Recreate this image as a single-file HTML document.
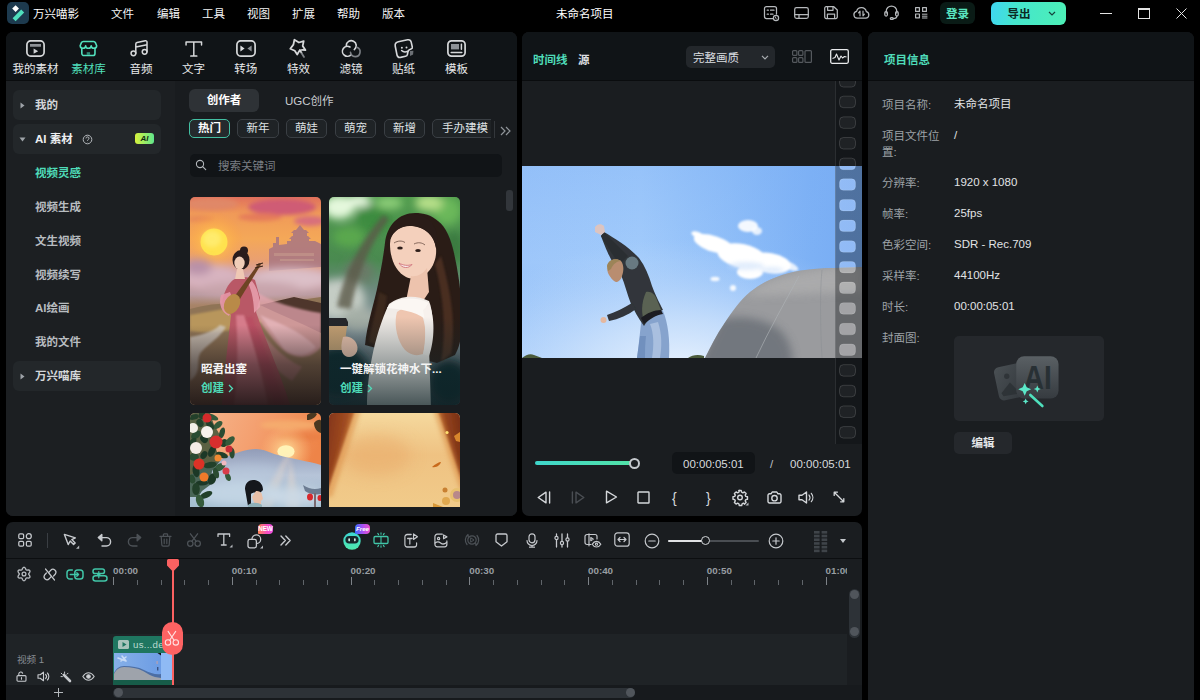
<!DOCTYPE html>
<html lang="zh-CN">
<head>
<meta charset="utf-8">
<title>万兴喵影</title>
<style>
*{box-sizing:border-box;margin:0;padding:0}
html,body{width:1200px;height:700px;overflow:hidden;background:#000}
body{font-family:"Liberation Sans","Noto Sans CJK SC",sans-serif;font-size:11.5px;color:#e6e8ea;position:relative;line-height:1}
.abs{position:absolute}
.t{position:absolute;white-space:nowrap;line-height:14px;margin-top:1px}
svg{position:absolute;overflow:visible}
.ic{fill:none;stroke:#c6c9cc;stroke-width:1.3;stroke-linecap:round;stroke-linejoin:round}
#titlebar .ic{stroke:#b6b9bc;stroke-width:1.25}
.hd .ic{stroke:#d6d8da}
.panel{position:absolute;border-radius:7px;overflow:hidden;background:#1a1d20}
.hd{position:absolute;left:0;top:0;right:0;height:49px;background:#101417;border-bottom:1px solid #0a0c0e}
/* titlebar */
.menu{top:6px;color:#f2f3f4}
/* left panel */
.tab{position:absolute;top:35px;width:52px;text-align:center;color:#e8eaec;line-height:14px;margin-top:.5px}
.side{position:absolute;left:0;top:49px;width:169px;bottom:0;background:#1c1f22}
.srow{position:absolute;left:7px;width:148px;height:30px;border-radius:6px;background:#23272a}
.sub{position:absolute;left:29px;color:#b8bcc0;font-weight:bold;line-height:14px;margin-top:1px}
.chip{position:absolute;top:87px;height:19px;border:1px solid #3a3f44;border-radius:5px;color:#dfe2e4;text-align:center;line-height:16.600px;background:#1f2326}
.card{position:absolute;width:131px;border-radius:5px;overflow:hidden;background:#333}
.lab{position:absolute;left:68px;color:#9da2a7}
.lab,.val{position:absolute;line-height:16px;white-space:nowrap}.lab{margin-top:.7px}
.lab{left:14px;color:#9da2a7}
.val{left:86px;color:#e1e3e5}
.tk{position:absolute;width:1px;background:#7d8287}
.tl{position:absolute;top:41px;color:#989da2;font-size:9.800px;font-weight:bold;line-height:12px}
.cj{color:inherit}
</style>
</head>
<body>
<!-- TITLEBAR -->
<div id="titlebar" class="abs" style="left:0;top:0;width:1200px;height:28px">
<div class="abs" style="left:7px;top:2px;width:22px;height:22px;border-radius:5px;background:#1d3a4e"></div>
<svg style="left:7px;top:2px" width="22" height="22" viewBox="0 0 22 22"><path d="M8.6 3.2 L12 6.6 L8.6 10 L5.2 6.6 Z" fill="#fff"/><path d="M14.2 7.6 L17.2 10.6 L8.6 19.2 L5.6 16.2 Z" fill="#4fe0bd"/></svg>
<span class="t" style="left:33px;top:6px;color:#fff"><span class="cj">万兴喵影</span></span>
<span class="t menu" style="left:111px"><span class="cj">文件</span></span>
<span class="t menu" style="left:157px"><span class="cj">编辑</span></span>
<span class="t menu" style="left:202px"><span class="cj">工具</span></span>
<span class="t menu" style="left:247px"><span class="cj">视图</span></span>
<span class="t menu" style="left:292px"><span class="cj">扩展</span></span>
<span class="t menu" style="left:337px"><span class="cj">帮助</span></span>
<span class="t menu" style="left:382px"><span class="cj">版本</span></span>
<span class="t" style="left:556px;top:6px;color:#fff"><span class="cj">未命名项目</span></span>
<!-- right icons -->
<svg style="left:764px;top:6px" width="16" height="16" viewBox="0 0 16 16" class="ic"><path d="M9 12.5H2.5a2 2 0 0 1-2-2V2.5a2 2 0 0 1 2-2h8a2 2 0 0 1 2 2V8"/><path d="M3.2 4.2h1.2M6.5 4.2h3.5M3.2 8.2h1.2M6.5 8.2h2.5"/><circle cx="12" cy="12" r="2.6"/><path d="M11.6 11v1.2l.8.6" stroke-width="1"/></svg>
<svg style="left:794px;top:7px" width="15" height="12" viewBox="0 0 15 12" class="ic"><rect x=".7" y=".7" width="13.6" height="10.6" rx="1.8"/><path d="M.7 7.5h13.6M5 7.5v3.8"/></svg>
<svg style="left:824px;top:6px" width="14" height="13" viewBox="0 0 14 13" class="ic"><path d="M.7 2.2a1.5 1.5 0 0 1 1.5-1.5h7.6l3.5 3.3v7a1.5 1.5 0 0 1-1.5 1.5H2.2a1.5 1.5 0 0 1-1.5-1.5z"/><path d="M3.6.9v3.4h5.4V.9M3.4 12.3V8h7.2v4.3"/></svg>
<svg style="left:853px;top:6px" width="17" height="13" viewBox="0 0 17 13" class="ic"><path d="M4.2 12.2a3.5 3.5 0 0 1-.6-6.9 5 5 0 0 1 9.700.4 3.300 3.300 0 0 1-.6 6.500z"/><path d="M7 9.800V5.200L5.600 6.800M10 5.200v4.600l1.400-1.600" stroke-width="1.200"/></svg>
<svg style="left:884px;top:5px" width="15" height="15" viewBox="0 0 15 15" class="ic"><path d="M2.2 8V6.3a5.3 5.3 0 0 1 10.6 0V8"/><rect x=".8" y="6.6" width="2.6" height="4.4" rx="1.2"/><rect x="11.6" y="6.6" width="2.6" height="4.4" rx="1.2"/><path d="M12.8 11c0 1.8-1.6 2.6-3.6 2.6"/><rect x="6.3" y="12.6" width="3" height="1.8" rx=".9"/></svg>
<svg style="left:915px;top:7px;stroke-width:1.2" width="13" height="12" viewBox="0 0 13 12" class="ic"><rect x=".6" y=".6" width="3.8" height="3.8"/><rect x="7.6" y=".6" width="3.8" height="3.8"/><rect x=".6" y="7" width="3.8" height="3.8"/><path d="M7.4 7.2h4.6M7.4 9.2h4.6M7.4 11h4.6" stroke-width="1"/></svg>
<div class="abs" style="left:940px;top:2px;width:35px;height:22px;border-radius:6px;background:#0a1b16;color:#5be7c2;font-weight:bold;text-align:center;line-height:24px"><span class="cj">登录</span></div>
<div class="abs" style="left:990.600px;top:1.500px;width:75.400px;height:23px;border-radius:6px;background:linear-gradient(100deg,#3fd6f2 0%,#45e6cc 35%,#4df0b6 100%);color:#0c2a24;font-weight:bold;line-height:25px"><span style="position:absolute;left:17px"><span class="cj">导出</span></span></div>
<svg style="left:1048px;top:11px" width="8" height="5" viewBox="0 0 8 5"><path d="M1 1l3 3 3-3" fill="none" stroke="#15443a" stroke-width="1.2"/></svg>
<div class="abs" style="left:1100px;top:13px;width:12px;height:1px;background:#e4e4e4"></div>
<div class="abs" style="left:1138px;top:8px;width:12px;height:11px;border:1px solid #e4e4e4;border-top-width:2px"></div>
<svg style="left:1176px;top:8px" width="11" height="11" viewBox="0 0 11 11"><path d="M.5.5l10 10M10.500.5l-10 10" stroke="#e4e4e4" stroke-width="1" fill="none"/></svg>
</div>
<!-- LEFT PANEL -->
<div id="media" class="panel" style="left:6px;top:32px;width:510.600px;height:484px">
<div class="hd">
<div class="abs" style="left:3.5px;top:0;width:52px;height:48px"><svg style="left:16.200px;top:8.400px;stroke-width:1.7" width="19" height="17" viewBox="0 0 19 17" class="ic"><rect x=".9" y=".9" width="17.200" height="15.200" rx="3.800"/><path d="M4 5.400h11" stroke="#8d9196" stroke-width="2.800" stroke-linecap="butt"/><path d="M7.600 8.600l4.600 2.600-4.600 2.600z" fill="#cfd2d4" stroke="none"/></svg><span class="tab" style="left:0;top:29px;color:#e8eaec"><span class="cj">我的素材</span></span></div>
<div class="abs" style="left:56.5px;top:0;width:52px;height:48px"><svg style="left:16.300px;top:8.300px;stroke-width:1.7;stroke:#52e0bd" width="18.800" height="17" viewBox="0 0 20 17" class="ic"><path d="M3 8.6v5.2a2.2 2.2 0 0 0 2.200 2.200h9.600a2.200 2.200 0 0 0 2.200-2.200V8.600"/><path d="M1.200 5.600l1.400-3.300a2.200 2.200 0 0 1 2-1.300h10.800a2.200 2.200 0 0 1 2 1.300l1.400 3.300c0 1.600-1.300 2.700-2.900 2.700s-2.900-1.100-2.900-2.700c0 1.600-1.300 2.700-2.950 2.700s-2.950-1.100-2.950-2.700c0 1.600-1.300 2.700-2.900 2.700s-2.900-1.100-2.900-2.700z"/><rect x="8.200" y="12.400" width="3.600" height="3" fill="#2f8a76" stroke="none"/></svg><span class="tab" style="left:0;top:29px;color:#52e0bd"><span class="cj">素材库</span></span></div>
<div class="abs" style="left:109.0px;top:0;width:52px;height:48px"><svg style="left:15px;top:8px;stroke-width:1.600" width="19" height="17.100" viewBox="0 0 20 18" class="ic"><circle cx="3.600" cy="14" r="2.500"/><circle cx="15.400" cy="12.400" r="2.500"/><path d="M6.100 14V4.200c0-.8.500-1.400 1.300-1.600l8.700-1.800c1-.2 1.800.4 1.800 1.400v10.200M6.100 7.400l11.800-2.400"/></svg><span class="tab" style="left:0;top:29px;color:#e8eaec"><span class="cj">音频</span></span></div>
<div class="abs" style="left:161.5px;top:0;width:52px;height:48px"><svg style="left:17.200px;top:9px;stroke-width:1.700" width="17.600" height="16" viewBox="0 0 20 16" preserveAspectRatio="none" class="ic"><path d="M1.200 3.800V1h17.600v2.800M10 1v14M6.600 15h6.800"/></svg><span class="tab" style="left:0;top:29px;color:#e8eaec"><span class="cj">文字</span></span></div>
<div class="abs" style="left:213.7px;top:0;width:52px;height:48px"><svg style="left:16px;top:8px;stroke-width:1.700" width="20" height="17" viewBox="0 0 20 17" class="ic"><rect x=".9" y=".9" width="18.200" height="15.200" rx="3.800"/><path d="M4.400 5.400l4.200 3.100-4.200 3.100z" fill="#dcdee0" stroke="none"/><path d="M15.600 5.400l-4.200 3.100 4.200 3.100z" fill="#8d9196" stroke="none"/></svg><span class="tab" style="left:0;top:29px;color:#e8eaec"><span class="cj">转场</span></span></div>
<div class="abs" style="left:266.5px;top:0;width:52px;height:48px"><svg style="left:16px;top:7px;stroke-width:1.800" width="20" height="20" viewBox="0 0 20 20" class="ic"><path d="M12.900 10.900L16.400 11.100 13.700 6.900 14.700 2.100 9.900 3.500 5.400.8 4.400 5.600 1.300 9.700 5.800 11.700 8.200 15.500 10.900 10.900 12.600 14.100" stroke-linejoin="round"/><path d="M12.800 14.400l2.200 3.500" stroke="#7d8186"/></svg><span class="tab" style="left:0;top:29px;color:#e8eaec"><span class="cj">特效</span></span></div>
<div class="abs" style="left:319.0px;top:0;width:52px;height:48px"><svg style="left:16px;top:8px;stroke-width:1.600" width="21" height="18" viewBox="0 0 21 18" class="ic"><path d="M5.250 5.600A5 5 0 1 1 13.300 9.600"/><path d="M9 7A5 5 0 1 0 10.200 14.600"/><path d="M15.900 7.300A4.800 4.800 0 1 1 9.500 12.400" stroke="#7d8186"/></svg><span class="tab" style="left:0;top:29px;color:#e8eaec"><span class="cj">滤镜</span></span></div>
<div class="abs" style="left:371.6px;top:0;width:52px;height:48px"><svg style="left:16px;top:7px;stroke-width:1.600" width="21" height="20" viewBox="0 0 21 20" class="ic"><path d="M16 12.100l3.400-.4-.3 3.800-3.100 1.400z" fill="#6c7075" stroke="none"/><path d="M4.300 2.800L13.600.8Q16.600.3 17.200 3.200L18.300 8Q18.600 9.600 17 10.100Q14.400 10.900 14 12.500L13.400 15.500Q13.200 17 11.500 17.300L6.500 18.400Q3.600 18.900 3 16L1.200 7Q.7 3.600 4.300 2.800Z"/><circle cx="7.900" cy="8.700" r="1" fill="#d4d6d8" stroke="none"/><circle cx="12.500" cy="8.500" r="1" fill="#d4d6d8" stroke="none"/><path d="M7.600 11.500Q9.800 13.800 13.800 12.300" stroke-width="1.500"/></svg><span class="tab" style="left:0;top:29px;color:#e8eaec"><span class="cj">贴纸</span></span></div>
<div class="abs" style="left:424.4px;top:0;width:52px;height:48px"><svg style="left:17px;top:8px;stroke-width:1.700" width="19" height="17" viewBox="0 0 19 17" class="ic"><rect x=".9" y=".9" width="17.200" height="15.200" rx="3.600"/><rect x="4" y="4" width="8" height="5.400" fill="#8d9196" stroke="none"/><path d="M14.400 4.200v5M4.200 12.400h10.600" stroke-width="1.500"/></svg><span class="tab" style="left:0;top:29px;color:#e8eaec"><span class="cj">模板</span></span></div>
</div>
<div class="side">
<div class="srow" style="top:9px"></div>
<svg style="left:14px;top:21px" width="5" height="7" viewBox="0 0 5 7"><path d="M.5.500l4 3-4 3z" fill="#9ea3a8"/></svg>
<span class="t" style="left:29px;top:16px;color:#d3d6d9;font-weight:bold"><span class="cj">我的</span></span>
<div class="srow" style="top:43px"></div>
<svg style="left:13px;top:56px" width="7" height="5" viewBox="0 0 7 5"><path d="M.5.500l3 4 3-4z" fill="#9ea3a8"/></svg>
<span class="t" style="left:29px;top:50px;color:#eceef0;font-weight:bold"><span class="cj">AI 素材</span></span>
<svg style="left:75.500px;top:52.500px" width="11" height="11" viewBox="0 0 11 11"><circle cx="5.500" cy="5.500" r="4.300" fill="none" stroke="#b4b8bc" stroke-width="1"/><path d="M4 4.400a1.500 1.500 0 1 1 2.200 1.300c-.5.300-.7.500-.7 1.100M5.500 8v.2" fill="none" stroke="#b4b8bc" stroke-width="1"/></svg>
<div class="abs" style="left:129px;top:52px;width:19px;height:11px;border-radius:3px;background:linear-gradient(90deg,#d8f23c,#5fe58c);color:#142a10;font-size:8px;font-weight:bold;font-style:italic;text-align:center;line-height:11px">AI</div>
<span class="sub" style="top:84px;color:#4fdcb9"><span class="cj">视频灵感</span></span>
<span class="sub" style="top:118px"><span class="cj">视频生成</span></span>
<span class="sub" style="top:152px"><span class="cj">文生视频</span></span>
<span class="sub" style="top:186px"><span class="cj">视频续写</span></span>
<span class="sub" style="top:219px"><span class="cj">AI绘画</span></span>
<span class="sub" style="top:253px"><span class="cj">我的文件</span></span>
<div class="srow" style="top:280px"></div>
<svg style="left:14px;top:292px" width="5" height="7" viewBox="0 0 5 7"><path d="M.5.500l4 3-4 3z" fill="#9ea3a8"/></svg>
<span class="t" style="left:29px;top:287px;color:#d3d6d9;font-weight:bold"><span class="cj">万兴喵库</span></span>
</div>

<div class="abs" style="left:169px;top:49px;right:0;bottom:0;background:#191c1f">
</div>
<div class="abs" style="left:183px;top:57px;width:70px;height:23px;border-radius:6px;background:#2e3236;color:#fff;font-weight:bold;text-align:center;line-height:23px"><span class="cj">创作者</span></div>
<span class="t" style="left:279px;top:61px;color:#c9cdd0"><span class="cj">UGC创作</span></span>
<div class="chip" style="left:183px;width:41px;border-color:#43bfa2;color:#fff;font-weight:bold;background:#252a2d"><span class="cj">热门</span></div>
<div class="chip" style="left:231px;width:42px"><span class="cj">新年</span></div>
<div class="chip" style="left:280px;width:41px"><span class="cj">萌娃</span></div>
<div class="chip" style="left:329px;width:41px"><span class="cj">萌宠</span></div>
<div class="chip" style="left:378px;width:41px"><span class="cj">新增</span></div>
<div class="chip" style="left:426px;width:72px;text-align:left;padding-left:9px"><span class="cj">手办建模</span></div>
<div class="abs" style="left:485px;top:86px;width:25px;height:23px;background:#191c1f"></div>
<div class="abs" style="left:488px;top:89px;width:1px;height:17px;background:#33373b"></div>
<svg style="left:493.500px;top:93.500px" width="11" height="10" viewBox="0 0 11 10"><path d="M1 1l4 4-4 4M6 1l4 4-4 4" fill="none" stroke="#8f9499" stroke-width="1.200"/></svg>
<div class="abs" style="left:184px;top:122px;width:312px;height:23px;border-radius:5px;background:#111417"></div>
<svg style="left:189px;top:127px" width="12" height="12" viewBox="0 0 12 12"><circle cx="5" cy="5" r="3.600" fill="none" stroke="#b2b6ba" stroke-width="1.100"/><path d="M7.700 7.700l3 3" stroke="#b2b6ba" stroke-width="1.200" stroke-linecap="round"/></svg>
<span class="t" style="left:212px;top:126px;color:#797e83"><span class="cj">搜索关键词</span></span>
<div class="abs" style="left:500px;top:158px;width:7px;height:21px;border-radius:3px;background:#32363b"></div>
<svg width="0" height="0" style="left:0;top:0"><defs>
<filter id="b1" x="-30%" y="-30%" width="160%" height="160%"><feGaussianBlur stdDeviation="1"/></filter>
<filter id="b2" x="-30%" y="-30%" width="160%" height="160%"><feGaussianBlur stdDeviation="2.200"/></filter>
<filter id="b4" x="-40%" y="-40%" width="180%" height="180%"><feGaussianBlur stdDeviation="4.500"/></filter>
<filter id="b8" x="-50%" y="-50%" width="200%" height="200%"><feGaussianBlur stdDeviation="8"/></filter>
<filter id="b05" x="-10%" y="-10%" width="120%" height="120%"><feGaussianBlur stdDeviation=".500"/></filter>
</defs></svg>
<!-- card 1 -->
<div class="card" style="left:184px;top:165px;height:208.400px">
<svg width="131" height="208" viewBox="0 0 131 208" style="left:0;top:0">
<defs>
<linearGradient id="c1bg" x1="0" y1="0" x2="0" y2="1"><stop offset="0" stop-color="#e0705c"/><stop offset=".08" stop-color="#f09a58"/><stop offset=".2" stop-color="#f4a858"/><stop offset=".3" stop-color="#eaa070"/><stop offset=".38" stop-color="#cfa0a6"/><stop offset=".47" stop-color="#b99aa0"/><stop offset=".52" stop-color="#a88468"/><stop offset=".7" stop-color="#866450"/><stop offset="1" stop-color="#5a4640"/></linearGradient>
<radialGradient id="c1sun" cx=".5" cy=".5" r=".5"><stop offset="0" stop-color="#ffd95a" stop-opacity=".95"/><stop offset=".5" stop-color="#ffb84a" stop-opacity=".6"/><stop offset="1" stop-color="#ffa040" stop-opacity="0"/></radialGradient>
<linearGradient id="c1ov" x1="0" y1="0" x2="0" y2="1"><stop offset="0" stop-color="#221a1a" stop-opacity="0"/><stop offset=".5" stop-color="#221a1a" stop-opacity=".58"/><stop offset="1" stop-color="#1c1414" stop-opacity=".9"/></linearGradient>
</defs>
<rect width="131" height="208" fill="url(#c1bg)"/>
<g filter="url(#b2)"><ellipse cx="22" cy="7" rx="26" ry="6" fill="#e08868"/><ellipse cx="92" cy="10" rx="34" ry="8" fill="#cf5c74"/><ellipse cx="70" cy="20" rx="22" ry="4" fill="#e57a5a"/><ellipse cx="120" cy="24" rx="16" ry="5" fill="#d8707c"/><ellipse cx="10" cy="22" rx="14" ry="3" fill="#e88a58"/></g>
<circle cx="24" cy="45" r="30" fill="url(#c1sun)"/>
<circle cx="24" cy="45" r="13.500" fill="#ffe24e"/>
<ellipse cx="22" cy="42" rx="9" ry="8" fill="#fff07a" opacity=".7" filter="url(#b2)"/>
<g fill="#a87682" opacity=".85" filter="url(#b05)"><path d="M79 74V52l4-2v-4h3v-6h3v8l8-1v-3h28l6 3v23z"/><path d="M101 46h18v-4h-18zM99 42l3-3h16l3 3zM103 39h14v-3h-14zM101 36l3-3h12l3 3zM106 33h8l-4-5z"/></g>
<path d="M84 56h40v3H84zM90 62h34v2H90z" fill="#c9a090" opacity=".5"/>
<g filter="url(#b4)"><ellipse cx="20" cy="80" rx="30" ry="12" fill="#d8b4c0"/><ellipse cx="100" cy="82" rx="40" ry="11" fill="#dcc0c8"/><ellipse cx="60" cy="92" rx="50" ry="8" fill="#c8a4ac"/><ellipse cx="8" cy="70" rx="14" ry="8" fill="#b890a8"/></g>
<path d="M0 112c20-6 50-8 75-4l56-8v108H0z" fill="#8f7456"/>
<path d="M70 108l34-8 27 6v30c-20-10-40-18-61-28z" fill="#4e362c"/>
<path d="M0 118l34-6 40 12c-20 8-50 14-74 10z" fill="#b8965c" filter="url(#b1)"/>
<path d="M0 140c12-2 24-6 30-12l6 2c-6 10-16 16-24 24s2 20-12 30z" fill="#d8d2cc" opacity=".75" filter="url(#b1)"/>

<!-- veil -->
<g filter="url(#b1)"><path d="M62 92c20 14 44 20 69 24v34c-10 12-22 12-34 6-14-10-26-32-38-46z" fill="#e6a6b2" opacity=".72"/><path d="M70 118c18 8 38 14 56 32-8 10-22 10-32 2z" fill="#f0c2ca" opacity=".6"/><path d="M60 120c14 20 30 40 52 50l-10 14c-20-12-34-34-46-54z" fill="#d8909c" opacity=".55"/></g>
<!-- dress -->
<path d="M43 83c6-4 15-4 22 0l5 18-4 14c10 30 24 60 34 93H32c2-30 6-62 9-90l-9-13c2-10 6-18 11-22z" fill="#b95866" filter="url(#b05)"/>
<path d="M46 118c2 30 2 60-2 90h34c-6-30-14-62-24-90z" fill="#e08898" opacity=".75" filter="url(#b1)"/>
<path d="M56 120c8 28 18 58 28 88h10c-8-30-20-60-32-88z" fill="#b84860" opacity=".6" filter="url(#b1)"/>
<path d="M31 98c-3 9 1 18 8 21l5-13-4-11z" fill="#e597a7" opacity=".9"/>
<path d="M62 84c5 6 8 16 8 26l-6 6c0-10-2-22-6-30z" fill="#e9a2b0" opacity=".85"/>
<!-- pipa -->
<path d="M44 100l25-34 2 1.500-22 36z" fill="#6e4424"/>
<ellipse cx="42" cy="107" rx="7.500" ry="10.500" transform="rotate(28 42 107)" fill="#b98a48"/>
<path d="M66 68l7-2M65 71l8-2" stroke="#3a2418" stroke-width="1.200"/>
<!-- head -->
<ellipse cx="51" cy="63" rx="8.500" ry="10" fill="#2a1c1c"/><circle cx="54" cy="53.500" r="4" fill="#2a1c1c"/>
<ellipse cx="49.500" cy="66" rx="5.200" ry="6.500" fill="#f0cdb8"/>
<path d="M47 72h6l2 10h-10z" fill="#efc8b4"/>
<rect width="131" height="80" y="128" fill="url(#c1ov)"/>
</svg>
<span class="t" style="left:11px;top:164px;color:#f4f4f4;font-weight:bold"><span class="cj">昭君出塞</span></span>
<span class="t" style="left:11px;top:183px;color:#4fdcb9;font-weight:bold"><span class="cj">创建</span></span>
<svg style="left:38px;top:186.500px" width="6" height="9" viewBox="0 0 6 9"><path d="M1 1l3.500 3.500L1 8" fill="none" stroke="#4fdcb9" stroke-width="1.300"/></svg>
</div>
<!-- card 2 -->
<div class="card" style="left:323px;top:165px;height:208.400px">
<svg width="131" height="208" viewBox="0 0 131 208" style="left:0;top:0">
<defs>
<linearGradient id="c2bg" x1="0" y1="0" x2="0" y2="1"><stop offset="0" stop-color="#4f9a4c"/><stop offset=".3" stop-color="#4a8a50"/><stop offset=".45" stop-color="#6f8a80"/><stop offset=".6" stop-color="#8a9aa0"/><stop offset=".8" stop-color="#5a666c"/><stop offset="1" stop-color="#2a3238"/></linearGradient>
<linearGradient id="c2ov" x1="0" y1="0" x2="0" y2="1"><stop offset="0" stop-color="#12282c" stop-opacity="0"/><stop offset=".5" stop-color="#12282c" stop-opacity=".36"/><stop offset="1" stop-color="#0e2226" stop-opacity=".74"/></linearGradient>
</defs>
<rect width="131" height="208" fill="url(#c2bg)"/>
<g filter="url(#b4)"><ellipse cx="10" cy="10" rx="16" ry="12" fill="#e4f8dc"/><ellipse cx="45" cy="22" rx="18" ry="14" fill="#3c8c40"/><ellipse cx="20" cy="40" rx="16" ry="10" fill="#5aa84e"/><ellipse cx="118" cy="14" rx="14" ry="14" fill="#6ab85a"/><ellipse cx="125" cy="50" rx="10" ry="16" fill="#3a7a40"/><ellipse cx="60" cy="6" rx="14" ry="6" fill="#8fd07a"/><ellipse cx="10" cy="102" rx="26" ry="20" fill="#c4ccc4"/><ellipse cx="30" cy="122" rx="18" ry="12" fill="#a4aea6"/><ellipse cx="100" cy="6" rx="14" ry="8" fill="#b8e08a"/><ellipse cx="30" cy="4" rx="12" ry="6" fill="#f0fce8"/><ellipse cx="10" cy="175" rx="30" ry="26" fill="#10282c"/><ellipse cx="120" cy="185" rx="20" ry="22" fill="#10282c"/><ellipse cx="122" cy="110" rx="12" ry="18" fill="#262c34"/><ellipse cx="30" cy="75" rx="14" ry="12" fill="#6a7a68"/></g>
<path d="M8 110c6-30 20-60 46-92l6 4c-22 30-32 58-38 90z" fill="#5c5a4a" opacity=".8" filter="url(#b2)"/>
<g transform="translate(4 3)">
<!-- hair back -->
<path d="M82 13c-16 0-28 12-30 30-2 16-5 32-8 46-4 18-10 36-12 56l22 6 50 12 18-8c6-10 8-26 7-44-1-20-4-40-8-58-3-14-8-26-16-32-7-6-14-8-23-8z" fill="#2a1c18" filter="url(#b05)"/>
<path d="M108 56c8 30 16 64 10 98l-10 8c6-32 2-68-6-98z" fill="#5a3826" opacity=".65" filter="url(#b1)"/>
<path d="M46 92c-2 18-8 34-10 50l10 4c2-18 6-34 8-50z" fill="#4a3024" opacity=".6" filter="url(#b1)"/>
<!-- face -->
<path d="M57 44c0-12 10-19 22-18 12 1 22 8 24 22 1 10-3 20-10 26-6 5-14 6-20 3-10-5-16-18-16-33z" fill="#f4d0bc"/>
<path d="M78 76c6 1 12-2 16-8l2 24-8 12-16 2z" fill="#edc3ad"/>
<path d="M61 43c4-2.500 8-2.500 11-.5M81 44c4-2 8-1.500 11 1" stroke="#5a4036" stroke-width=".9" fill="none" opacity=".8"/>
<ellipse cx="67" cy="48" rx="2.800" ry="1.600" fill="#2e1e1a"/><ellipse cx="85" cy="50.500" rx="2.800" ry="1.600" fill="#2e1e1a"/>
<path d="M66 63c4 2.500 9 3 13 1.500-3 4-10 4.500-13-1.500z" fill="#f8ecec" stroke="#cf7078" stroke-width=".9"/>
<path d="M55 50c0-16 12-26 26-24 12 2 20 10 22 22 4-14-2-28-14-32s-28 2-32 14c-2 6-3 14-2 20z" fill="#2a1c18"/>
<!-- dress & arm -->
<path d="M56 104c10-8 26-10 40-3 5 12 4 30 0 46l2 61H34c0-30 6-70 22-104z" fill="#f1ece8" filter="url(#b05)"/>
<path d="M64 112c8-6 18-5 24 0 5 12 6 28 2 42-8 3-16 0-21-8-6-10-8-24-5-34z" fill="#efc6b0"/>
<path d="M54 108c6-10 26-13 42-5-4 4-5 10-4 16-10-8-26-10-38-11z" fill="#fbf7f3"/>
<path d="M96 104c6 12 6 36 0 52l-6-2c3-14 3-30 0-44z" fill="#f7f1ed"/>
</g>
<!-- cup -->
<path d="M0 121h17l2 4v4H0z" fill="#25262a"/><path d="M0 129h18l-3 24H0z" fill="#c9a274"/>
<path d="M14 140c6-2 12 2 14 8s-2 12-8 12-10-6-6-20z" fill="#eec4ae" filter="url(#b05)"/>
<rect width="131" height="88" y="120" fill="url(#c2ov)"/>
</svg>
<span class="t" style="left:11px;top:164px;color:#f4f4f4;font-weight:bold"><span class="cj">一键解锁花神水下...</span></span>
<span class="t" style="left:11px;top:183px;color:#4fdcb9;font-weight:bold"><span class="cj">创建</span></span>
<svg style="left:38px;top:186.500px" width="6" height="9" viewBox="0 0 6 9"><path d="M1 1l3.500 3.500L1 8" fill="none" stroke="#4fdcb9" stroke-width="1.300"/></svg>
</div>

<!-- card 3 -->
<div class="card" style="left:184px;top:381px;height:94px;border-radius:5px 5px 0 0">
<svg width="131" height="94" viewBox="0 0 131 94" style="left:0;top:0">
<defs>
<linearGradient id="c3bg" x1="0" y1="0" x2="1" y2=".3"><stop offset="0" stop-color="#f6b890"/><stop offset=".5" stop-color="#f4a070"/><stop offset="1" stop-color="#ee8448"/></linearGradient>
<linearGradient id="c3m" x1="0" y1="0" x2="0" y2="1"><stop offset="0" stop-color="#929cb8"/><stop offset=".45" stop-color="#b6c4d8"/><stop offset="1" stop-color="#a4bed0"/></linearGradient>
<radialGradient id="c3sun" cx=".5" cy=".5" r=".5"><stop offset="0" stop-color="#ffe8a0" stop-opacity=".9"/><stop offset="1" stop-color="#ffc080" stop-opacity="0"/></radialGradient>
</defs>
<rect width="131" height="94" fill="url(#c3bg)"/>
<g filter="url(#b2)"><ellipse cx="100" cy="12" rx="30" ry="5" fill="#f6b070" opacity=".8"/><ellipse cx="110" cy="24" rx="22" ry="4" fill="#e87a40" opacity=".6"/></g>
<circle cx="96" cy="38" r="26" fill="url(#c3sun)"/>
<ellipse cx="96" cy="38.500" rx="8.600" ry="6.200" fill="#fff3b8"/>
<path d="M0 62c12-6 24-12 36-18 10-4 20-8 30-8 8 0 14 4 22 6 14 4 30 6 43 10v42H0z" fill="url(#c3m)" filter="url(#b05)"/>
<path d="M96 42l-30 52h16l18-52zM100 42l10 52h-14z" fill="#fbe0c8" opacity=".35" filter="url(#b2)"/>
<g filter="url(#b4)"><ellipse cx="50" cy="80" rx="44" ry="12" fill="#c4d6e6" opacity=".9"/><ellipse cx="105" cy="84" rx="28" ry="10" fill="#ccdae8" opacity=".85"/><ellipse cx="60" cy="60" rx="30" ry="8" fill="#b8c8dc" opacity=".6"/></g>
<!-- foliage -->
<g filter="url(#b05)"><path d="M0 0h20l4 12 6 10-4 14 4 12-8 10-2 14-8 6-4 6H0z" fill="#27452e" opacity=".75"/><ellipse cx="4" cy="4" rx="5.0" ry="2.7" transform="rotate(166 4 4)" fill="#24402a"/><ellipse cx="12" cy="2" rx="4.2" ry="3.3" transform="rotate(93 12 2)" fill="#24402a"/><ellipse cx="22" cy="4" rx="6.7" ry="2.8" transform="rotate(22 22 4)" fill="#345a3a"/><ellipse cx="28" cy="12" rx="5.3" ry="2.9" transform="rotate(141 28 12)" fill="#345a3a"/><ellipse cx="10" cy="10" rx="4.2" ry="3.3" transform="rotate(57 10 10)" fill="#24402a"/><ellipse cx="20" cy="12" rx="5.7" ry="3.1" transform="rotate(56 20 12)" fill="#24402a"/><ellipse cx="32" cy="20" rx="5.7" ry="2.7" transform="rotate(107 32 20)" fill="#2c4c32"/><ellipse cx="6" cy="22" rx="5.6" ry="3.4" transform="rotate(143 6 22)" fill="#2c4c32"/><ellipse cx="14" cy="26" rx="4.3" ry="3.4" transform="rotate(48 14 26)" fill="#1e3826"/><ellipse cx="34" cy="30" rx="4.3" ry="3.6" transform="rotate(144 34 30)" fill="#24402a"/><ellipse cx="40" cy="28" rx="5.9" ry="3.2" transform="rotate(136 40 28)" fill="#345a3a"/><ellipse cx="22" cy="38" rx="6.3" ry="3.2" transform="rotate(116 22 38)" fill="#1e3826"/><ellipse cx="4" cy="44" rx="4.9" ry="3.7" transform="rotate(178 4 44)" fill="#2c4c32"/><ellipse cx="14" cy="42" rx="4.2" ry="3.0" transform="rotate(126 14 42)" fill="#1e3826"/><ellipse cx="32" cy="42" rx="6.2" ry="2.9" transform="rotate(18 32 42)" fill="#24402a"/><ellipse cx="42" cy="40" rx="5.5" ry="2.7" transform="rotate(87 42 40)" fill="#2c4c32"/><ellipse cx="20" cy="52" rx="6.8" ry="3.1" transform="rotate(171 20 52)" fill="#24402a"/><ellipse cx="6" cy="58" rx="6.3" ry="3.4" transform="rotate(80 6 58)" fill="#1e3826"/><ellipse cx="30" cy="54" rx="6.1" ry="3.4" transform="rotate(148 30 54)" fill="#345a3a"/><ellipse cx="38" cy="64" rx="4.2" ry="2.6" transform="rotate(69 38 64)" fill="#345a3a"/><ellipse cx="12" cy="70" rx="6.1" ry="2.6" transform="rotate(179 12 70)" fill="#1e3826"/><ellipse cx="22" cy="66" rx="5.9" ry="4.0" transform="rotate(114 22 66)" fill="#1e3826"/><ellipse cx="6" cy="76" rx="6.1" ry="3.8" transform="rotate(88 6 76)" fill="#24402a"/><ellipse cx="16" cy="82" rx="6.8" ry="3.0" transform="rotate(156 16 82)" fill="#24402a"/><ellipse cx="26" cy="60" rx="5.5" ry="2.8" transform="rotate(73 26 60)" fill="#2c4c32"/><ellipse cx="2" cy="30" rx="6.2" ry="3.1" transform="rotate(127 2 30)" fill="#24402a"/><ellipse cx="2" cy="66" rx="4.5" ry="3.1" transform="rotate(71 2 66)" fill="#2c4c32"/><ellipse cx="10" cy="88" rx="6.5" ry="3.8" transform="rotate(71 10 88)" fill="#345a3a"/>
<circle cx="17" cy="5" r="4.500" fill="#d42a2c"/><circle cx="3" cy="15" r="5" fill="#f4efe8"/><circle cx="17" cy="19" r="6" fill="#f6f2ec"/><circle cx="26" cy="29" r="6.500" fill="#d82e2e"/><circle cx="6" cy="35" r="6" fill="#f4eee6"/><circle cx="39" cy="36" r="3.500" fill="#c82c34"/><circle cx="28" cy="45" r="3.500" fill="#f08a30"/><circle cx="9" cy="51" r="5.500" fill="#dc3028"/><circle cx="36" cy="58" r="3.500" fill="#d83a4a"/><circle cx="14" cy="64" r="4.500" fill="#f07a2a"/><circle cx="34" cy="50" r="2.500" fill="#f0b8c0"/></g>
<path d="M117 2c4-3 8-3 10-1-2 4-6 6-10 6zM124 10c3-4 7-4 7-2v12c-4-1-7-5-7-10z" fill="#4a3820"/>
<!-- man -->
<path d="M55 76c0-6 4-9 8-9 6 0 10 4 10 10l-4 4c-2-2-6-2-8 0v12h-3z" fill="#15171c"/>
<path d="M66 78c3 0 6 1 6 4l1 4-2 2v3l-6 1-3-8z" fill="#e8c0a8"/>
<path d="M58 92c4-3 10-3 14 0v2H58z" fill="#8fb0b8"/>
<!-- pavilion -->
<path d="M113 72c6 4 12 5 18 3v6c-6 1-12 0-16-3z" fill="#6c7c92"/><path d="M124 80h2v14h-2z" fill="#7a6a70"/>
<ellipse cx="120" cy="84" rx="3" ry="3.500" fill="#d8282c"/><ellipse cx="130" cy="85" rx="2.500" ry="3" fill="#d8282c"/>
</svg>
</div>

<!-- card 4 -->
<div class="card" style="left:323px;top:381px;height:94px;border-radius:5px 5px 0 0">
<svg width="131" height="94" viewBox="0 0 131 94" style="left:0;top:0">
<defs>
<linearGradient id="c4bg" x1="0" y1="0" x2="0" y2="1"><stop offset="0" stop-color="#f5d99e"/><stop offset=".45" stop-color="#efc282"/><stop offset="1" stop-color="#f1cb8a"/></linearGradient>
<linearGradient id="c4l" x1="0" y1="0" x2="1" y2=".35"><stop offset="0" stop-color="#7a2e16"/><stop offset=".6" stop-color="#9c4820"/><stop offset="1" stop-color="#bc6c30"/></linearGradient>
<linearGradient id="c4r" x1="1" y1="0" x2="0" y2=".35"><stop offset="0" stop-color="#6a2610"/><stop offset=".6" stop-color="#90401c"/><stop offset="1" stop-color="#b8642c"/></linearGradient>
</defs>
<rect width="131" height="94" fill="url(#c4bg)"/>
<ellipse cx="48" cy="42" rx="34" ry="20" fill="#e8a868" opacity=".5" filter="url(#b8)"/>
<g filter="url(#b1)"><path d="M-6 -4h33L-1 78h-5z" fill="url(#c4l)"/><path d="M137 -4h-29l25 74h4z" fill="url(#c4r)"/></g>
<g filter="url(#b2)" opacity=".6"><path d="M25 -4h7L3 84h-7z" fill="#dc9048"/><path d="M110 -4h-6l27 80h6z" fill="#d88a42"/></g>
<circle cx="118" cy="19.500" r="1.600" fill="#ffe070"/>
<path d="M103 54c3-3 7-5 9-5-1 3-4 6-9 5z" fill="#c86a1c"/>
<path d="M125 23l6-4v10l-4-1z" fill="#d8862c"/>
<g filter="url(#b05)"><circle cx="128" cy="82" r="7" fill="#e8c070"/><circle cx="128" cy="82" r="4" fill="#b8888a"/><circle cx="117" cy="88" r="4" fill="#e0a850"/><circle cx="116" cy="77" r="2.500" fill="#c88030"/><path d="M104 90l10 4h-10z" fill="#d89838"/></g>
</svg>
</div>



</div>
<!-- PREVIEW PANEL -->
<div id="preview" class="panel" style="left:522px;top:32px;width:340px;height:484px">
<div class="hd">
<span class="t" style="left:11px;top:20.300px;color:#4fdcb9;font-weight:bold"><span class="cj">时间线</span></span>
<span class="t" style="left:56px;top:20.300px;color:#dcdee0;font-weight:bold"><span class="cj">源</span></span>
<div class="abs" style="left:164px;top:14px;width:89px;height:22px;border-radius:5px;background:#23272b"></div>
<span class="t" style="left:171px;top:18px;color:#dcdfe1"><span class="cj">完整画质</span></span>
<svg style="left:239px;top:23px" width="8" height="5" viewBox="0 0 8 5"><path d="M1 .8l3 3 3-3" fill="none" stroke="#a8acb0" stroke-width="1.200"/></svg>
<svg style="left:270px;top:18px;stroke-width:1.200;stroke:#55595e;fill:none" width="21" height="14" viewBox="0 0 21 14"><rect x=".6" y=".6" width="4.300" height="4.800" rx="1"/><rect x="6.600" y=".6" width="4.300" height="4.800" rx="1"/><rect x=".6" y="7.600" width="4.300" height="4.800" rx="1"/><rect x="6.600" y="7.600" width="4.300" height="4.800" rx="1"/><rect x="13" y=".6" width="6.400" height="11.800" rx="1"/></svg>
<svg style="left:308px;top:17px;stroke-width:1.300;stroke:#e8eaec;fill:none" width="19" height="15" viewBox="0 0 19 15"><rect x=".7" y=".7" width="17.600" height="13.600" rx="1.500"/><path d="M2.500 9.500l2.500-1 1.500-3.500 2.500 6 2-4 1.500 2 2-1.500 2 .5" stroke-width="1.100" stroke-linejoin="round"/></svg>
</div>
<!-- video -->
<svg style="left:0;top:134px" width="340" height="192" viewBox="0 0 340 192">
<defs>
<linearGradient id="sky" x1="0" y1="0" x2="1" y2="0"><stop offset="0" stop-color="#9ec7fa"/><stop offset=".35" stop-color="#a2cbfb"/><stop offset=".62" stop-color="#8fbef8"/><stop offset=".85" stop-color="#7db1f5"/><stop offset="1" stop-color="#76abf3"/></linearGradient>
<radialGradient id="skyglow" cx=".47" cy="1.080" r=".7"><stop offset="0" stop-color="#eaf3fe" stop-opacity="1"/><stop offset=".4" stop-color="#d2e5fc" stop-opacity=".75"/><stop offset="1" stop-color="#b8d6fb" stop-opacity="0"/></radialGradient>
<linearGradient id="skyr" x1="0" y1="0" x2="0" y2="1"><stop offset="0" stop-color="#7aaef5" stop-opacity=".3"/><stop offset=".5" stop-color="#7aaef5" stop-opacity="0"/><stop offset="1" stop-color="#c0dcfc" stop-opacity=".35"/></linearGradient>
<linearGradient id="dome" x1="0" y1="0" x2="1" y2="0"><stop offset="0" stop-color="#6e737a"/><stop offset=".35" stop-color="#8d9196"/><stop offset="1" stop-color="#9a9ea3"/></linearGradient>
<linearGradient id="domesh" x1="0" y1="0" x2="0" y2="1"><stop offset="0" stop-color="#a6aaae" stop-opacity=".9"/><stop offset=".5" stop-color="#90949a" stop-opacity=".3"/><stop offset="1" stop-color="#7c8188" stop-opacity="0"/></linearGradient>
</defs>
<rect width="340" height="192" fill="url(#sky)"/>
<rect width="340" height="192" fill="url(#skyr)"/>
<rect width="340" height="192" fill="url(#skyglow)"/>
<!-- cloud -->
<g filter="url(#b1)" fill="#fff"><ellipse cx="192" cy="78" rx="21" ry="8" transform="rotate(18 192 78)"/><ellipse cx="220" cy="90" rx="25" ry="12" transform="rotate(12 220 90)"/><ellipse cx="248" cy="97" rx="21" ry="10" transform="rotate(10 248 97)"/><ellipse cx="228" cy="106" rx="13" ry="7"/><ellipse cx="226" cy="60" rx="10" ry="6" opacity=".9"/><ellipse cx="235" cy="65" rx="5" ry="4" opacity=".8"/><ellipse cx="176" cy="69" rx="7" ry="3" transform="rotate(20 176 69)"/><ellipse cx="268" cy="100" rx="9" ry="3.500" transform="rotate(25 268 100)" opacity=".8"/><ellipse cx="193" cy="113" rx="4.500" ry="2.200" opacity=".9"/><ellipse cx="211" cy="122" rx="3" ry="3" opacity=".9"/></g>
<g filter="url(#b2)" fill="#c4dbf9" opacity=".5"><ellipse cx="224" cy="100" rx="18" ry="4"/><ellipse cx="250" cy="104" rx="12" ry="3"/></g>
<!-- pv-dome -->
<clipPath id="dclip"><path d="M183 192c6-12 12-24 19-34 8-12 16-24 26-32 10-8 20-13 32-17 16-5 34-7 52-7l28-1v91z"/></clipPath>
<g clip-path="url(#dclip)">
<rect x="180" y="98" width="160" height="94" fill="#9a9b9e"/>
<path d="M222 130c20-18 60-28 118-30v26c-40 0-80 4-118 4z" fill="#adadae" opacity=".85" filter="url(#b4)"/>
<path d="M176 200l22-46c20-6 44-2 60 10 10 10 14 24 12 40z" fill="#6c7178" opacity=".85" filter="url(#b4)"/>
<path d="M277 110c-14 26-30 54-43 82" stroke="#b0b4b8" stroke-width=".9" fill="none" opacity=".7"/>
<path d="M300 104c-2 20-2 50 0 88" stroke="#888c92" stroke-width=".8" fill="none" opacity=".5"/>
</g>
<!-- pv-man -->
<g filter="url(#b05)">
<path d="M120 150c7-4 15-6 21-5 5 12 7 28 6 47h-32c2-14 3-28 5-42z" fill="#86a3cd"/>
<path d="M128 158c4 10 4 22 2 34h8c2-12 2-24-2-36z" fill="#b4c8e4" opacity=".75"/>
<path d="M118 170c-1 8-2 14-3 22h8c0-8 0-14 1-22z" fill="#6888b8" opacity=".7"/>
<path d="M82 66c10 6 24 14 35 26 6 8 10 18 13 28 3 8 6 14 8 18l3 6c-7 2-14 8-19 16-6-8-10-16-13-22-4-10-6-20-10-29-4-6-10-12-20-39z" fill="#30363a"/>
<path d="M79 70c6 10 12 20 19 28l8-8c-8-8-16-16-24-24z" fill="#2b2f31"/>
<path d="M124 126c5-1 9 2 11 8l4 10c-6 2-12 7-16 13-4-8-4-20 1-31z" fill="#5a6252"/>
<path d="M110 137c-8 5-16 9-25 12l2 6c10-2 19-6 27-12z" fill="#30353a"/>
<circle cx="81.500" cy="154" r="3" fill="#e4b8a0"/>
<path d="M119 152c6-5 13-8 20-8l2 4c-7 1-13 5-19 10z" fill="#1c1e20"/>
<path d="M86 98c3-5 9-6 13-3 3 4 3 10 1 15-1 4-4 6-6 6-3-1-6-5-8-9-1-3-1-6 0-9z" fill="#b98d70"/>
<path d="M85 100c1-6 8-9 14-5-4 0-8 3-10 8l-3 2z" fill="#9c8458"/>
<path d="M73 61c2-3 6-4 9-1l1 6-4 3-6-3z" fill="#dcc4c0"/>
<circle cx="110" cy="97" r="6.500" fill="#9fbcc8" opacity=".5"/>
</g>
<path d="M0 192c4-3 8-5 12-3l8 3zM166 192c4-3 10-4 16-2v2z" fill="#4a5a3a"/>
</svg>
<!-- film strip -->
<svg style="left:313px;top:49px;overflow:hidden" width="27" height="363" viewBox="0 0 27 363">
<defs><mask id="fm"><rect width="27" height="363" fill="#fff"/><g fill="#000"><rect x="4.500" y="-5.45" width="16" height="11.500" rx="4"/><rect x="4.500" y="15.20" width="16" height="11.500" rx="4"/><rect x="4.500" y="35.85" width="16" height="11.500" rx="4"/><rect x="4.500" y="56.50" width="16" height="11.500" rx="4"/><rect x="4.500" y="77.15" width="16" height="11.500" rx="4"/><rect x="4.500" y="97.80" width="16" height="11.500" rx="4"/><rect x="4.500" y="118.45" width="16" height="11.500" rx="4"/><rect x="4.500" y="139.10" width="16" height="11.500" rx="4"/><rect x="4.500" y="159.75" width="16" height="11.500" rx="4"/><rect x="4.500" y="180.40" width="16" height="11.500" rx="4"/><rect x="4.500" y="201.05" width="16" height="11.500" rx="4"/><rect x="4.500" y="221.70" width="16" height="11.500" rx="4"/><rect x="4.500" y="242.35" width="16" height="11.500" rx="4"/><rect x="4.500" y="263.00" width="16" height="11.500" rx="4"/><rect x="4.500" y="283.65" width="16" height="11.500" rx="4"/><rect x="4.500" y="304.30" width="16" height="11.500" rx="4"/><rect x="4.500" y="324.95" width="16" height="11.500" rx="4"/><rect x="4.500" y="345.60" width="16" height="11.500" rx="4"/></g></mask><clipPath id="fimg"><rect x="0" y="85" width="27" height="102"/></clipPath><clipPath id="fimg2"><rect x="0" y="187" width="27" height="90"/></clipPath></defs>
<rect width="27" height="363" fill="#0c0f12" opacity=".37" mask="url(#fm)"/>
<g fill="#fff" fill-opacity=".025" stroke="#fff" stroke-opacity=".14" stroke-width="1"><rect x="4.500" y="-5.45" width="16" height="11.500" rx="4"/><rect x="4.500" y="15.20" width="16" height="11.500" rx="4"/><rect x="4.500" y="35.85" width="16" height="11.500" rx="4"/><rect x="4.500" y="56.50" width="16" height="11.500" rx="4"/><rect x="4.500" y="77.15" width="16" height="11.500" rx="4"/><rect x="4.500" y="97.80" width="16" height="11.500" rx="4"/><rect x="4.500" y="118.45" width="16" height="11.500" rx="4"/><rect x="4.500" y="139.10" width="16" height="11.500" rx="4"/><rect x="4.500" y="159.75" width="16" height="11.500" rx="4"/><rect x="4.500" y="180.40" width="16" height="11.500" rx="4"/><rect x="4.500" y="201.05" width="16" height="11.500" rx="4"/><rect x="4.500" y="221.70" width="16" height="11.500" rx="4"/><rect x="4.500" y="242.35" width="16" height="11.500" rx="4"/><rect x="4.500" y="263.00" width="16" height="11.500" rx="4"/><rect x="4.500" y="283.65" width="16" height="11.500" rx="4"/><rect x="4.500" y="304.30" width="16" height="11.500" rx="4"/><rect x="4.500" y="324.95" width="16" height="11.500" rx="4"/><rect x="4.500" y="345.60" width="16" height="11.500" rx="4"/></g>
<g fill="#fff" fill-opacity=".17" clip-path="url(#fimg)"><rect x="4.500" y="-5.45" width="16" height="11.500" rx="4"/><rect x="4.500" y="15.20" width="16" height="11.500" rx="4"/><rect x="4.500" y="35.85" width="16" height="11.500" rx="4"/><rect x="4.500" y="56.50" width="16" height="11.500" rx="4"/><rect x="4.500" y="77.15" width="16" height="11.500" rx="4"/><rect x="4.500" y="97.80" width="16" height="11.500" rx="4"/><rect x="4.500" y="118.45" width="16" height="11.500" rx="4"/><rect x="4.500" y="139.10" width="16" height="11.500" rx="4"/><rect x="4.500" y="159.75" width="16" height="11.500" rx="4"/><rect x="4.500" y="180.40" width="16" height="11.500" rx="4"/><rect x="4.500" y="201.05" width="16" height="11.500" rx="4"/><rect x="4.500" y="221.70" width="16" height="11.500" rx="4"/><rect x="4.500" y="242.35" width="16" height="11.500" rx="4"/><rect x="4.500" y="263.00" width="16" height="11.500" rx="4"/><rect x="4.500" y="283.65" width="16" height="11.500" rx="4"/><rect x="4.500" y="304.30" width="16" height="11.500" rx="4"/><rect x="4.500" y="324.95" width="16" height="11.500" rx="4"/><rect x="4.500" y="345.60" width="16" height="11.500" rx="4"/></g>
<g fill="#fff" fill-opacity=".07" clip-path="url(#fimg2)"><rect x="4.500" y="-5.45" width="16" height="11.500" rx="4"/><rect x="4.500" y="15.20" width="16" height="11.500" rx="4"/><rect x="4.500" y="35.85" width="16" height="11.500" rx="4"/><rect x="4.500" y="56.50" width="16" height="11.500" rx="4"/><rect x="4.500" y="77.15" width="16" height="11.500" rx="4"/><rect x="4.500" y="97.80" width="16" height="11.500" rx="4"/><rect x="4.500" y="118.45" width="16" height="11.500" rx="4"/><rect x="4.500" y="139.10" width="16" height="11.500" rx="4"/><rect x="4.500" y="159.75" width="16" height="11.500" rx="4"/><rect x="4.500" y="180.40" width="16" height="11.500" rx="4"/><rect x="4.500" y="201.05" width="16" height="11.500" rx="4"/><rect x="4.500" y="221.70" width="16" height="11.500" rx="4"/><rect x="4.500" y="242.35" width="16" height="11.500" rx="4"/><rect x="4.500" y="263.00" width="16" height="11.500" rx="4"/><rect x="4.500" y="283.65" width="16" height="11.500" rx="4"/><rect x="4.500" y="304.30" width="16" height="11.500" rx="4"/><rect x="4.500" y="324.95" width="16" height="11.500" rx="4"/><rect x="4.500" y="345.60" width="16" height="11.500" rx="4"/></g>
<rect width="1" height="363" fill="#fff" opacity=".1"/>
</svg>
<!-- controls -->
<div class="abs" style="left:13px;top:429px;width:98px;height:4px;border-radius:2px;background:linear-gradient(90deg,#3fd6cb,#52e2a6)"></div>
<div class="abs" style="left:107px;top:426px;width:11px;height:11px;border-radius:50%;border:2px solid #c4c8cc;background:#1a1d20"></div>
<div class="abs" style="left:150px;top:420px;width:83px;height:22px;border-radius:5px;background:#111417"></div>
<span class="t" style="left:161px;top:424px;color:#d8dbdd;font-size:11.5px">00:00:05:01</span>
<span class="t" style="left:248px;top:424px;color:#c0c4c8">/</span>
<span class="t" style="left:268px;top:424px;color:#d8dbdd;font-size:11.5px">00:00:05:01</span>
<svg style="left:15.0px;top:458.5px;stroke-width:1.400;stroke:#d4d7da;fill:none" width="14" height="13" viewBox="0 0 14 13" stroke-linejoin="round" stroke-linecap="round"><path d="M9 1.200L1.200 6.500 9 11.800z"/><path d="M12.600 1v11"/></svg>
<svg style="left:49.0px;top:458.5px;stroke-width:1.400;stroke:#d4d7da;fill:none" width="14" height="13" viewBox="0 0 14 13" stroke-linejoin="round" stroke-linecap="round"><path d="M5 1.200l7.800 5.300L5 11.800z" stroke="#4a4e53"/><path d="M1.400 1v11" stroke="#4a4e53"/></svg>
<svg style="left:82.5px;top:458.0px;stroke-width:1.400;stroke:#d4d7da;fill:none" width="13" height="14" viewBox="0 0 13 14" stroke-linejoin="round" stroke-linecap="round"><path d="M1.500 1.200l10 5.800-10 5.800z"/></svg>
<svg style="left:114.5px;top:458.5px;stroke-width:1.400;stroke:#d4d7da;fill:none" width="13" height="13" viewBox="0 0 13 13" stroke-linejoin="round" stroke-linecap="round"><rect x="1" y="1" width="11" height="11" rx=".5"/></svg>
<span class="t" style="left:150px;top:457px;color:#d4d7da;font-size:14px;line-height:16px">{</span>
<span class="t" style="left:184px;top:457px;color:#d4d7da;font-size:14px;line-height:16px">}</span>
<svg style="left:211.0px;top:457.5px;stroke-width:1.400;stroke:#d4d7da;fill:none" width="16" height="15" viewBox="0 0 16 15" stroke-linejoin="round" stroke-linecap="round"><path d="M6.300 1h2.400l.4 1.700 1.300.6 1.500-.9 1.700 1.700-.9 1.500.6 1.300 1.700.4v2.400l-1.700.4-.6 1.300.9 1.500-1.700 1.700" transform="translate(-.5 -.5)"/><path d="M11.200 13.300l-1.300-.8-1.300.6-.4 1.700H5.800l-.4-1.700-1.300-.6-1.500.9L.9 11.700l.9-1.500-.6-1.300L-.5 8.500V6.100l1.700-.4.6-1.300-.9-1.500L2.600 1.200l1.500.9 1.300-.6L5.800-.2" transform="translate(.5 .7)"/><circle cx="7" cy="7.500" r="2.300"/><path d="M15.500 12.500v3h-3z" fill="#b4b8bc" stroke="none"/></svg>
<svg style="left:244.5px;top:458.5px;stroke-width:1.400;stroke:#d4d7da;fill:none" width="15" height="13" viewBox="0 0 15 13" stroke-linejoin="round" stroke-linecap="round"><path d="M1 4.200a1.500 1.500 0 0 1 1.500-1.500h1.700l1-1.700h4.600l1 1.700h1.700a1.500 1.500 0 0 1 1.500 1.500v6.300a1.500 1.500 0 0 1-1.500 1.500h-10a1.500 1.500 0 0 1-1.500-1.500z"/><circle cx="7.500" cy="7.200" r="2.700"/></svg>
<svg style="left:276.0px;top:458.5px;stroke-width:1.400;stroke:#d4d7da;fill:none" width="17" height="13" viewBox="0 0 17 13" stroke-linejoin="round" stroke-linecap="round"><path d="M1 4.200h3l4.500-3.200v11L4 8.800H1z"/><path d="M11 4a4 4 0 0 1 0 5M13.300 2.300a6.500 6.500 0 0 1 0 8.400" stroke-width="1.200"/></svg>
<svg style="left:311.0px;top:459.0px;stroke-width:1.400;stroke:#d4d7da;fill:none" width="12" height="12" viewBox="0 0 12 12" stroke-linejoin="round" stroke-linecap="round"><path d="M1.200 4.400V1.200h3.200M1.200 1.200l9.600 9.600M10.800 7.600v3.200H7.600" stroke-width="1.300"/></svg>

</div>
<!-- INFO PANEL -->
<div id="info" class="panel" style="left:868px;top:32px;width:326px;height:680px">
<div class="hd"><span class="t" style="left:16px;top:20.300px;color:#4fdcb9;font-weight:bold"><span class="cj">项目信息</span></span></div>
<span class="lab" style="top:64px"><span class="cj">项目名称:</span></span><span class="val" style="top:64px"><span class="cj">未命名项目</span></span>
<span class="lab" style="top:95px"><span class="cj">项目文件位</span></span><span class="val" style="top:95px">/</span>
<span class="lab" style="top:111px"><span class="cj">置:</span></span>
<span class="lab" style="top:142px"><span class="cj">分辨率:</span></span><span class="val" style="top:142px">1920 x 1080</span>
<span class="lab" style="top:173px"><span class="cj">帧率:</span></span><span class="val" style="top:173px">25fps</span>
<span class="lab" style="top:204px"><span class="cj">色彩空间:</span></span><span class="val" style="top:204px">SDR - Rec.709</span>
<span class="lab" style="top:235px"><span class="cj">采样率:</span></span><span class="val" style="top:235px">44100Hz</span>
<span class="lab" style="top:266px"><span class="cj">时长:</span></span><span class="val" style="top:266px">00:00:05:01</span>
<span class="lab" style="top:297px"><span class="cj">封面图:</span></span>
<div class="abs" style="left:86px;top:304px;width:150px;height:85px;border-radius:5px;background:#25282c"></div>
<svg style="left:124.500px;top:321px" width="74" height="59.200" viewBox="0 0 70 56">
<defs><linearGradient id="aig" x1="0" y1="0" x2="1" y2="1"><stop offset="0" stop-color="#4a5054"/><stop offset="1" stop-color="#30353a"/></linearGradient><linearGradient id="aig2" x1="0" y1="0" x2="0" y2="1"><stop offset="0" stop-color="#5a6064"/><stop offset="1" stop-color="#363b40"/></linearGradient></defs>
<rect x="3" y="11" width="30" height="32" rx="5" transform="rotate(-12 18 27)" fill="url(#aig)"/>
<path d="M8 38l8-10 6 6 4-4v8l-16 3z" fill="#2a2f33" opacity=".8"/><circle cx="13" cy="22" r="2.500" fill="#2a2f33" opacity=".8"/>
<rect x="22" y="3" width="40" height="40" rx="7.500" fill="url(#aig2)"/>
<text x="29" y="34.400" font-family="Liberation Sans, sans-serif" font-weight="bold" font-size="32" fill="#283034" textLength="26.500" lengthAdjust="spacingAndGlyphs">AI</text>
<path d="M35.300 39.700l11.400 10.500" stroke="#4fe0bd" stroke-width="2.400" stroke-linecap="round"/>
<path d="M30 28.300l1.900 4.200 4.200 1.900-4.200 1.900-1.900 4.200-1.900-4.200-4.200-1.900 4.200-1.900z" fill="#5be7c8"/>
<path d="M41.900 30.800l1 2.300 2.300 1-2.300 1-1 2.300-1-2.300-2.300-1 2.300-1z" fill="#5be7c8"/>
<path d="M30.900 43l.9 1.900 1.900.9-1.900.9-.9 1.900-.9-1.900-1.900-.9 1.900-.9z" fill="#5be7c8"/>
</svg>
<div class="abs" style="left:86px;top:400px;width:58px;height:22px;border-radius:5px;background:#25282c;color:#e4e6e8;font-weight:bold;text-align:center;line-height:23.500px"><span class="cj">编辑</span></div>
</div>
<!-- TIMELINE PANEL -->
<div id="timeline" class="panel" style="left:6px;top:522px;width:856px;height:190px">
<svg style="left:11.500px;top:11px;stroke-width:1.25;stroke:#c6c9cd;fill:none" width="14" height="14" viewBox="0 0 14 14" stroke-linejoin="round"><rect x=".8" y=".8" width="4.800" height="4.800" rx="1.200"/><circle cx="10.800" cy="3.200" r="2.500"/><rect x=".8" y="8.400" width="4.800" height="4.800" rx="1.200"/><rect x="8.400" y="8.400" width="4.800" height="4.800" rx="1.200"/></svg>
<div class="abs" style="left:41px;top:11px;width:1px;height:15px;background:#3a3e43"></div>
<svg style="left:57px;top:11px;stroke-width:1.4;stroke:#c6c9cd;fill:none" width="17" height="16" viewBox="0 0 17 16" stroke-linejoin="round" stroke-linecap="round"><path d="M1.400 1.400l3.800 10.200 2-3.600 3.400 3.600 1.600-1.600-3.400-3.400 3.600-1.800z"/><path d="M16.200 12.500v3.200h-3.200z" fill="#b4b8bc" stroke="none"/></svg>
<svg style="left:90.500px;top:11px;stroke-width:1.4;stroke:#c6c9cd;fill:none" width="15" height="14" viewBox="0 0 15 14" stroke-linejoin="round" stroke-linecap="round"><path d="M4.800 1.400L1.300 4.600l3.500 3.200z" fill="#c6c9cd"/><path d="M2 4.600h7.400a4.200 4.200 0 0 1 0 8.400H5"/></svg>
<svg style="left:120.500px;top:11px;stroke-width:1.4;stroke:#4c5156;fill:none" width="15" height="14" viewBox="0 0 15 14" stroke-linejoin="round" stroke-linecap="round"><path d="M10.200 1.400l3.500 3.200-3.500 3.200z" fill="#4c5156"/><path d="M13 4.600H5.600a4.200 4.200 0 0 0 0 8.400H10"/></svg>
<svg style="left:152.5px;top:11.0px;stroke-width:1.2;stroke:#4c5156;fill:none" width="13" height="14" viewBox="0 0 13 14" stroke-linejoin="round" stroke-linecap="round"><path d="M1 3.400h11M4.400 3.200V1.600c0-.4.300-.7.700-.7h2.800c.4 0 .7.300.7.700v1.600M2.200 3.600l.6 8.200c0 .8.600 1.300 1.300 1.300h4.800c.7 0 1.300-.5 1.300-1.300l.6-8.200M5.200 6v4.600M7.800 6v4.600"/></svg>
<svg style="left:181.0px;top:11.0px;stroke-width:1.3;stroke:#4c5156;fill:none" width="14" height="14" viewBox="0 0 14 14" stroke-linejoin="round" stroke-linecap="round"><circle cx="3.300" cy="10.600" r="2.700"/><circle cx="10.700" cy="10.600" r="2.700"/><path d="M4.800 8.400L10.600.8M9.200 8.400L3.400.8"/></svg>
<svg style="left:211.0px;top:11.0px;stroke-width:1.30;stroke:#c6c9cd;fill:none" width="16" height="15" viewBox="0 0 16 15" stroke-linejoin="round" stroke-linecap="round"><path d="M1 3.400V1h11.600v2.400M6.800 1v11M4.400 12h4.800" stroke-width="1.300"/><path d="M15.500 11.500v3h-3z" fill="#b4b8bc" stroke="none"/></svg>
<svg style="left:241.0px;top:11.5px;stroke-width:1.30;stroke:#c6c9cd;fill:none" width="16" height="15" viewBox="0 0 16 15" stroke-linejoin="round" stroke-linecap="round"><circle cx="9.300" cy="5.200" r="4.400"/><rect x="1" y="5.400" width="8.400" height="8.400" rx="1.800" fill="#1a1d20"/><path d="M16 11.500v3h-3z" fill="#b4b8bc" stroke="none"/></svg>
<div class="abs" style="left:252px;top:2.300px;width:15px;height:9.300px;border-radius:4px 4px 4px 1px;background:linear-gradient(90deg,#ff8452,#f64cc0 60%,#ee50e6);color:#fff;font-size:6.300px;font-weight:bold;text-align:center;line-height:9.500px;letter-spacing:-.1px">NEW</div>
<svg style="left:273.5px;top:12.5px;stroke-width:1.40;stroke:#c6c9cd;fill:none" width="11" height="11" viewBox="0 0 11 11" stroke-linejoin="round" stroke-linecap="round"><path d="M1 1l4.300 4.500L1 10M5.800 1l4.300 4.500L5.800 10"/></svg>
<svg style="left:336.600px;top:9.800px" width="18" height="18" viewBox="0 0 18 18"><defs><linearGradient id="rbg" x1="0" y1="0" x2="0" y2="1"><stop offset="0" stop-color="#3cd4d2"/><stop offset="1" stop-color="#50eaae"/></linearGradient></defs><circle cx="9" cy="9" r="8.700" fill="url(#rbg)"/><rect x="2.400" y="4" width="13.200" height="7.600" rx="3.800" fill="#16262a"/><rect x="5.300" y="6.200" width="1.700" height="3.200" rx=".8" fill="#cfeee6"/><rect x="11" y="6.200" width="1.700" height="3.200" rx=".8" fill="#cfeee6"/></svg>
<div class="abs" style="left:349px;top:2.200px;width:15px;height:9.800px;border-radius:4px 4px 4px 1px;background:linear-gradient(90deg,#386cfa,#a850f4 50%,#f052cc);color:#fff;font-size:6.200px;font-weight:bold;font-style:italic;text-align:center;line-height:10px">Free</div>
<svg style="left:367px;top:10px;stroke-width:1.3;stroke:#41c6a8;fill:none" width="16" height="16" viewBox="0 0 16 16" stroke-linejoin="round" stroke-linecap="round"><rect x="1" y="4.500" width="14" height="7" rx="1.200"/><path d="M8 4.500v7M8 .8v1.400M8 13.800v1.400M4.800 1.400l.8 1.200M11.200 1.400l-.8 1.200M4.800 14.600l.8-1.200M11.200 14.600l-.8-1.200" stroke-width="1.100"/></svg>
<svg style="left:397.800px;top:10.5px;stroke-width:1.30;stroke:#c6c9cd;fill:none" width="14.400" height="15" viewBox="0 0 16 15" preserveAspectRatio="none" stroke-linejoin="round" stroke-linecap="round"><path d="M8 1.500H3.500a2.500 2.500 0 0 0-2.500 2.500v7.500A2.500 2.500 0 0 0 3.500 14h8a2.500 2.500 0 0 0 2.500-2.500V10"/><path d="M4 5.500h5M6.500 5.500v5.500" stroke-width="1.300"/><path d="M10.600 1l4.400 2.700-4.400 2.700z"/></svg>
<svg style="left:427.800px;top:10.5px;stroke-width:1.30;stroke:#c6c9cd;fill:none" width="13.800" height="15" viewBox="0 0 15 15" preserveAspectRatio="none" stroke-linejoin="round" stroke-linecap="round"><path d="M9 1.200H3.500a2.500 2.500 0 0 0-2.500 2.500v7.600a2.500 2.500 0 0 0 2.500 2.500h8a2.500 2.500 0 0 0 2.500-2.500V8"/><path d="M1.200 10c2-1.500 4-1.500 6 0s4 1.500 6.500-.5" stroke-width="1.300"/><circle cx="5" cy="5.500" r="1.200"/><path d="M10.400 2l3.600 1.900-3.600 1.900z"/></svg>
<svg style="left:457.5px;top:10.0px;stroke-width:1.2;stroke:#4c5156;fill:none" width="16" height="16" viewBox="0 0 16 16" stroke-linejoin="round" stroke-linecap="round"><path d="M4 2.500a7 7 0 0 0-1 10M12 13.500a7 7 0 0 0 1-10M4 2.500l.3 2.200M12 13.500l-.3-2.200"/><circle cx="8" cy="8" r="4.200"/><path d="M7 6l3 2-3 2z" stroke-width="1"/></svg>
<svg style="left:489.0px;top:11.0px;stroke-width:1.30;stroke:#c6c9cd;fill:none" width="13" height="14" viewBox="0 0 13 14" stroke-linejoin="round" stroke-linecap="round"><path d="M1 2.500A1.500 1.500 0 0 1 2.500 1h8A1.500 1.500 0 0 1 12 2.500v6.200L6.500 13 1 8.700z"/></svg>
<svg style="left:519.5px;top:11.0px;stroke-width:1.20;stroke:#c6c9cd;fill:none" width="12" height="15" viewBox="0 0 12 15" stroke-linejoin="round" stroke-linecap="round"><rect x="3" y=".8" width="6" height="9" rx="3"/><path d="M1 7.500a5 5 0 0 0 10 0M6 12.500v1.700M3.500 14.200h5"/></svg>
<svg style="left:548.0px;top:10.5px;stroke-width:1.20;stroke:#c6c9cd;fill:none" width="16" height="15" viewBox="0 0 16 15" stroke-linejoin="round" stroke-linecap="round"><path d="M2.500 1v13M8 1v13M13.500 1v13" stroke-width="1.300"/><circle cx="2.500" cy="5" r="1.600" fill="#1a1d20"/><circle cx="8" cy="10" r="1.600" fill="#1a1d20"/><circle cx="13.500" cy="6.500" r="1.600" fill="#1a1d20"/></svg>
<svg style="left:577.5px;top:11.0px;stroke-width:1.20;stroke:#c6c9cd;fill:none" width="17" height="15" viewBox="0 0 17 15" stroke-linejoin="round" stroke-linecap="round"><path d="M7 11.500H3A2 2 0 0 1 1 9.500v-6A2 2 0 0 1 3 1.500h8a2 2 0 0 1 2 2V6M5 .8v12"/><path d="M6.800 4.500l2.600 1.600-2.600 1.600z" stroke-width="1.100"/><path d="M8.200 11.200c1.200-2 3-2.800 4.300-2.800s3.100.8 4.300 2.800c-1.200 2-3 2.800-4.300 2.800s-3.100-.8-4.300-2.800z" stroke-width="1.200" fill="#1a1d20"/><circle cx="12.500" cy="11.200" r="1.100" stroke-width="1.100"/></svg>
<svg style="left:607.5px;top:10.0px;stroke-width:1.20;stroke:#c6c9cd;fill:none" width="16" height="15" viewBox="0 0 16 15" stroke-linejoin="round" stroke-linecap="round"><rect x=".8" y=".8" width="14.400" height="13.400" rx="2.800"/><path d="M4 7.500h8M6 5.500l-2 2 2 2M10 5.500l2 2-2 2" stroke-width="1.200"/></svg>
<svg style="left:638.0px;top:10.5px;stroke-width:1.20;stroke:#c6c9cd;fill:none" width="16" height="16" viewBox="0 0 16 16" stroke-linejoin="round" stroke-linecap="round"><circle cx="8" cy="8" r="6.800"/><path d="M4.800 8h6.400"/></svg>
<div class="abs" style="left:662px;top:17.500px;width:91px;height:2px;border-radius:1px;background:#4a4e53"></div><div class="abs" style="left:662px;top:17.500px;width:36px;height:2px;border-radius:1px;background:#e0e2e4"></div><div class="abs" style="left:695px;top:14px;width:9px;height:9px;border-radius:50%;border:1.500px solid #d4d7da;background:#1a1d20"></div>
<svg style="left:762.0px;top:10.5px;stroke-width:1.20;stroke:#c6c9cd;fill:none" width="16" height="16" viewBox="0 0 16 16" stroke-linejoin="round" stroke-linecap="round"><circle cx="8" cy="8" r="6.800"/><path d="M4.800 8h6.400M8 4.800v6.400"/></svg>
<svg style="left:808px;top:8.500px;fill:#3f4449" width="13.200" height="21.200" viewBox="0 0 13.200 21.200"><rect x="0" y="0.00" width="5.600" height="2.600"/><rect x="7.600" y="0.00" width="5.600" height="2.600"/><rect x="0" y="3.72" width="5.600" height="2.600"/><rect x="7.600" y="3.72" width="5.600" height="2.600"/><rect x="0" y="7.44" width="5.600" height="2.600"/><rect x="7.600" y="7.44" width="5.600" height="2.600"/><rect x="0" y="11.16" width="5.600" height="2.600"/><rect x="7.600" y="11.16" width="5.600" height="2.600"/><rect x="0" y="14.88" width="5.600" height="2.600"/><rect x="7.600" y="14.88" width="5.600" height="2.600"/><rect x="0" y="18.60" width="5.600" height="2.600"/><rect x="7.600" y="18.60" width="5.600" height="2.600"/></svg>
<svg style="left:834px;top:17px" width="6" height="4" viewBox="0 0 6 4"><path d="M0 0h6L3 4z" fill="#c4c8cc"/></svg>
<div class="abs" style="left:0;top:36px;width:856px;height:1px;background:#0c0e10"></div>
<svg style="left:11px;top:45px;stroke-width:1.3;stroke:#b9bdc1;fill:none" width="14" height="14" viewBox="0 0 14 14" stroke-linejoin="round"><path d="M7.00 0.250L7.58 0.42L8.08 0.87L8.48 1.49L8.77 2.14L9.02 2.66L9.32 2.97L9.75 3.08L10.33 3.04L11.03 2.97L11.77 3.00L12.41 3.21L12.85 3.62L12.99 4.21L12.85 4.87L12.51 5.52L12.10 6.10L11.77 6.58L11.65 7.00L11.77 7.42L12.10 7.90L12.51 8.48L12.85 9.13L12.99 9.79L12.85 10.37L12.41 10.79L11.77 11.00L11.03 11.03L10.33 10.96L9.75 10.92L9.33 11.03L9.02 11.34L8.77 11.86L8.48 12.51L8.08 13.13L7.58 13.58L7.00 13.75L6.42 13.58L5.92 13.13L5.52 12.51L5.23 11.86L4.98 11.34L4.67 11.03L4.25 10.92L3.67 10.96L2.97 11.03L2.23 11.00L1.59 10.79L1.15 10.38L1.01 9.79L1.15 9.13L1.49 8.48L1.90 7.90L2.23 7.42L2.35 7.00L2.23 6.58L1.90 6.10L1.49 5.52L1.15 4.87L1.01 4.21L1.15 3.63L1.59 3.21L2.23 3.00L2.97 2.97L3.67 3.04L4.25 3.08L4.68 2.97L4.98 2.66L5.23 2.14L5.52 1.49L5.92 0.87L6.42 0.42Z"/><circle cx="7" cy="7" r="1.900"/></svg>
<svg style="left:36.5px;top:44.5px;stroke-width:1.20;stroke:#c6c9cd;fill:none" width="14" height="15" viewBox="0 0 14 15" stroke-linejoin="round" stroke-linecap="round"><path d="M6.200 5.200l1.600-2a3 3 0 0 1 4.600 3.800l-1.800 2M7.800 9.800l-1.600 2a3 3 0 0 1-4.600-3.800l1.800-2M2.500 2l9 11"/></svg>
<svg style="left:59.500px;top:46.500px;stroke-width:1.5;stroke:#41c6a8;fill:none" width="18" height="11" viewBox="0 0 18 11" stroke-linejoin="round" stroke-linecap="round"><path d="M6.300 1H3.800a2.800 2.800 0 0 0-2.800 2.800v3.400a2.800 2.800 0 0 0 2.800 2.800h2.500"/><rect x="8.800" y="1" width="8.200" height="9" rx="2.800"/><path d="M4.200 5.500h8.300M10.800 3.800l1.800 1.700-1.800 1.700" stroke-width="1.300"/></svg>
<svg style="left:85.500px;top:45.500px;stroke-width:1.5;stroke:#41c6a8;fill:none" width="16" height="14" viewBox="0 0 16 14" stroke-linejoin="round" stroke-linecap="round"><rect x="1" y="1" width="11.500" height="4.600" rx="2.200"/><rect x="1" y="7.800" width="14" height="5.200" rx="2.500"/><path d="M6.800 3.600v6.200M5.600 6.700h2.400" stroke-width="1.200"/></svg>
<div class="abs" style="left:0;top:37px;width:841px;height:40px;overflow:hidden"><div class="tk" style="left:107.0px;top:18px;height:8px"></div><span class="tl" style="top:6px;left:107.0px">00:00</span><div class="tk" style="left:130.8px;top:21px;height:5px;background:#60656a"></div><div class="tk" style="left:154.5px;top:21px;height:5px;background:#60656a"></div><div class="tk" style="left:178.2px;top:21px;height:5px;background:#60656a"></div><div class="tk" style="left:202.0px;top:21px;height:5px;background:#60656a"></div><div class="tk" style="left:225.8px;top:18px;height:8px"></div><span class="tl" style="top:6px;left:225.8px">00:10</span><div class="tk" style="left:249.5px;top:21px;height:5px;background:#60656a"></div><div class="tk" style="left:273.2px;top:21px;height:5px;background:#60656a"></div><div class="tk" style="left:297.0px;top:21px;height:5px;background:#60656a"></div><div class="tk" style="left:320.8px;top:21px;height:5px;background:#60656a"></div><div class="tk" style="left:344.5px;top:18px;height:8px"></div><span class="tl" style="top:6px;left:344.5px">00:20</span><div class="tk" style="left:368.2px;top:21px;height:5px;background:#60656a"></div><div class="tk" style="left:392.0px;top:21px;height:5px;background:#60656a"></div><div class="tk" style="left:415.8px;top:21px;height:5px;background:#60656a"></div><div class="tk" style="left:439.5px;top:21px;height:5px;background:#60656a"></div><div class="tk" style="left:463.2px;top:18px;height:8px"></div><span class="tl" style="top:6px;left:463.2px">00:30</span><div class="tk" style="left:487.0px;top:21px;height:5px;background:#60656a"></div><div class="tk" style="left:510.8px;top:21px;height:5px;background:#60656a"></div><div class="tk" style="left:534.5px;top:21px;height:5px;background:#60656a"></div><div class="tk" style="left:558.2px;top:21px;height:5px;background:#60656a"></div><div class="tk" style="left:582.0px;top:18px;height:8px"></div><span class="tl" style="top:6px;left:582.0px">00:40</span><div class="tk" style="left:605.8px;top:21px;height:5px;background:#60656a"></div><div class="tk" style="left:629.5px;top:21px;height:5px;background:#60656a"></div><div class="tk" style="left:653.2px;top:21px;height:5px;background:#60656a"></div><div class="tk" style="left:677.0px;top:21px;height:5px;background:#60656a"></div><div class="tk" style="left:700.8px;top:18px;height:8px"></div><span class="tl" style="top:6px;left:700.8px">00:50</span><div class="tk" style="left:724.5px;top:21px;height:5px;background:#60656a"></div><div class="tk" style="left:748.2px;top:21px;height:5px;background:#60656a"></div><div class="tk" style="left:772.0px;top:21px;height:5px;background:#60656a"></div><div class="tk" style="left:795.8px;top:21px;height:5px;background:#60656a"></div><div class="tk" style="left:819.5px;top:18px;height:8px"></div><span class="tl" style="top:6px;left:819.5px">01:00</span></div>
<!-- track row -->
<div class="abs" style="left:0;top:112px;width:841px;height:51px;background:#1f2326"></div>
<div class="abs" style="left:0;top:163px;width:856px;height:20px;background:#171a1d"></div>
<span class="t" style="left:11px;top:130px;color:#888d93;font-size:9.600px"><span class="cj">视频 1</span></span>
<svg style="left:9.5px;top:149.0px;stroke-width:1.10;stroke:#c6c9cd;fill:none" width="11" height="11" viewBox="0 0 11 11" stroke-linejoin="round" stroke-linecap="round"><rect x="1" y="4.600" width="9" height="5.600" rx="1"/><path d="M2.800 4.400V2.800a2 2 0 0 1 3.800-.6M5.500 6.600v1.600" /></svg>
<svg style="left:30.5px;top:149.0px;stroke-width:1.10;stroke:#c6c9cd;fill:none" width="13" height="11" viewBox="0 0 13 11" stroke-linejoin="round" stroke-linecap="round"><path d="M1 3.800h2.200l3.300-2.600v8.600L3.200 7.200H1z"/><path d="M8.600 3.400a3 3 0 0 1 0 4.200M10.400 2a5 5 0 0 1 0 7" stroke-width="1.100"/></svg>
<svg style="left:54.0px;top:148.5px;stroke-width:1.00;stroke:#c6c9cd;fill:none" width="12" height="12" viewBox="0 0 12 12" stroke-linejoin="round" stroke-linecap="round"><path d="M5 5l5.500 5.500M4.600 1v1.400M1.200 2.200l1 1M1 5.600h1.400M8 2.200l-1 1" /><path d="M4 4l6 6" stroke-width="2.600"/></svg>
<svg style="left:76.0px;top:150.0px;stroke-width:1.10;stroke:#c6c9cd;fill:none" width="13" height="9" viewBox="0 0 13 9" stroke-linejoin="round" stroke-linecap="round"><path d="M.8 4.500C2.500 2 4.500.8 6.500.8s4 1.200 5.700 3.700C10.500 7 8.500 8.200 6.500 8.200S2.500 7 .8 4.500z"/><circle cx="6.500" cy="4.500" r="1.800" fill="#d4d7da"/></svg>

<div class="abs" style="left:48px;top:169.500px;width:9px;height:1px;background:#b4b8bc"></div><div class="abs" style="left:52px;top:165.500px;width:1px;height:9px;background:#b4b8bc"></div>
<!-- clip -->
<div class="abs" style="left:107px;top:114px;width:59px;height:49px;border-radius:3px 0 0 0;background:#1f7660;overflow:hidden">
<div class="abs" style="left:5px;top:4px;width:11px;height:9px;border-radius:1.500px;background:#a9c4bc"></div>
<svg style="left:8.500px;top:6px" width="5" height="5" viewBox="0 0 5 5"><path d="M.5 0l4 2.500-4 2.500z" fill="#1f7660"/></svg>
<span class="t" style="left:20px;top:1px;color:#b9dbd0;font-size:9.700px;letter-spacing:.25px">us...de</span>
<svg style="left:0;top:17px" width="59" height="27" viewBox="0 0 59 27"><defs><linearGradient id="th" x1="0" y1="0" x2="1" y2="0"><stop offset="0" stop-color="#86b0e8"/><stop offset="1" stop-color="#6c9ce4"/></linearGradient></defs><rect x="1" width="47" height="27" fill="url(#th)"/><rect x="48" width="11" height="27" fill="#8fbaf4"/><path d="M1 27V20c2-4 5-7 10-7 8 0 14 1 20 4 6 3 12 5 17 4V27z" fill="#4c6ea4"/><path d="M1 27V21c2-4 5-7 10-7 7 0 13 1 19 4 5 3 8 5 12 6l6 1v2z" fill="#9ea3ab"/><path d="M5 5l8 3M9 3l4 5M13 4l-5 4" stroke="#e8f0fc" stroke-width="1.600" opacity=".7" stroke-linecap="round" filter="url(#b05)"/><path d="M44.500 0h3.500v2.500z" fill="#0e1012"/><rect x="43.500" y="8" width="1.200" height="3" fill="#c9a0a0" opacity=".8"/><rect x="44" y="14" width="1.400" height="3.500" fill="#344a78" opacity=".9"/></svg>
<div class="abs" style="left:0;top:44px;width:59px;height:5px;background:#175c49"></div>
</div>
<!-- scrollbars -->
<div class="abs" style="left:107px;top:165.500px;width:522px;height:10px;border-radius:5px;background:#2d3237"></div>
<div class="abs" style="left:107.500px;top:166px;width:9px;height:9px;border-radius:50%;background:#50555b"></div>
<div class="abs" style="left:619.500px;top:166px;width:9px;height:9px;border-radius:50%;background:#50555b"></div>
<div class="abs" style="left:843px;top:67px;width:11px;height:49px;border-radius:5.500px;background:#2d3237"></div>
<div class="abs" style="left:844px;top:68px;width:9px;height:9px;border-radius:50%;background:#50555b"></div>
<div class="abs" style="left:844px;top:105px;width:9px;height:9px;border-radius:50%;background:#50555b"></div>
<!-- playhead -->
<div class="abs" style="left:165.800px;top:40px;width:2px;height:123px;background:#fb6161"></div>
<svg style="left:160.800px;top:37px" width="12" height="12" viewBox="0 0 12 12"><path d="M1.500 0h9A1.500 1.500 0 0 1 12 1.500v5L7.200 11.400a1.700 1.700 0 0 1-2.400 0L0 6.500v-5A1.500 1.500 0 0 1 1.500 0z" fill="#fb6161"/></svg>
<div class="abs" style="left:155.800px;top:100px;width:21px;height:33px;border-radius:10.500px;background:#fd6363"></div>
<svg style="left:159.400px;top:108px" width="14" height="17" viewBox="0 0 14 17"><g fill="none" stroke="#ffe0e0" stroke-width="1.100" stroke-linecap="round"><circle cx="3" cy="12.400" r="2.700"/><circle cx="10.800" cy="12.400" r="2.700"/><path d="M10.700 1.400L4.700 10.300M3.100 1.400L9.100 10.300"/></g></svg>
</div>
</body>
</html>
